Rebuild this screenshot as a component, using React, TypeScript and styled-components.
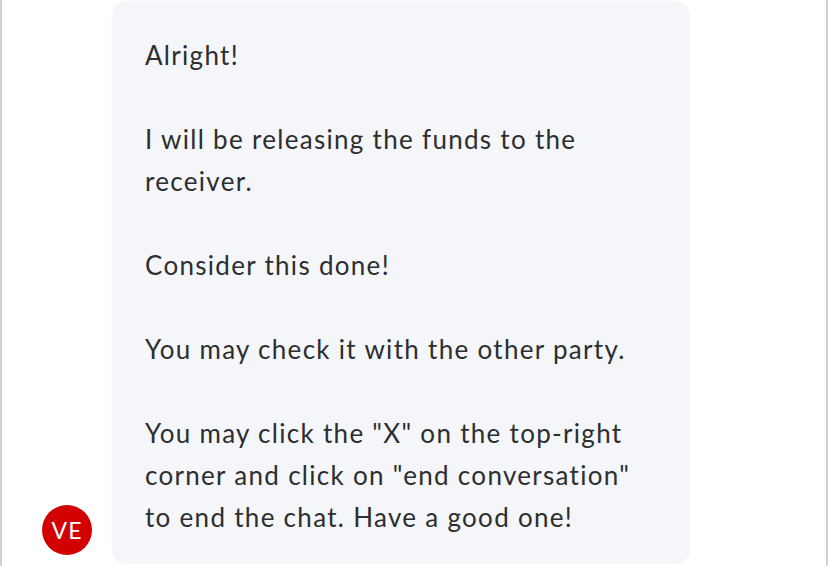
import React from "react";
import styled, { createGlobalStyle } from "styled-components";

const Global = createGlobalStyle`
  html, body { margin: 0; padding: 0; background: #fff; }
  body { font-family: Lato, "Open Sans", sans-serif; }
`;

const Frame = styled.div`
  box-sizing: border-box;
  width: 828px;
  height: 566px;
  border-left: 2px solid #cfd1d3;
  border-right: 2px solid #cfd1d3;
  overflow: hidden;
  display: flex;
  align-items: flex-start;
  padding: 1px 0 0 40px;
`;

const Row = styled.div`
  display: flex;
  align-items: flex-end;
  gap: 20px;
`;

const Avatar = styled.div`
  width: 50px;
  height: 50px;
  border-radius: 50%;
  background: #d20000;
  color: #fff;
  display: flex;
  align-items: center;
  justify-content: center;
  font-family: Lato, sans-serif;
  font-size: 23px;
  letter-spacing: 1px;
  margin-bottom: 9px;
  flex-shrink: 0;
`;

const Bubble = styled.div`
  box-sizing: border-box;
  width: 578px;
  background: #f5f6fa;
  border-radius: 16px;
  box-shadow: 0 0 2px rgba(0, 0, 0, 0.06);
  padding: 33px 20px 26px 33px;
  color: #2c2e2f;
  font-family: Lato, sans-serif;
  font-size: 26px;
  letter-spacing: 1.3px;
  line-height: 42px;
`;

const Para = styled.p`
  margin: 0 0 42px 0;
  &:last-child { margin-bottom: 0; }
`;

const Line = styled.span`
  display: block;
  white-space: nowrap;
`;

const paragraphs: string[][] = [
  ["Alright!"],
  ["I will be releasing the funds to the", "receiver."],
  ["Consider this done!"],
  ["You may check it with the other party."],
  [
    'You may click the "X" on the top-right',
    'corner and click on "end conversation"',
    "to end the chat. Have a good one!",
  ],
];

export default function App() {
  return (
    <>
      <Global />
      <Frame>
        <Row>
          <Avatar>VE</Avatar>
          <Bubble>
            {paragraphs.map((p, i) => (
              <Para key={i}>
                {p.map((l, j) => (
                  <Line key={j}>{l}</Line>
                ))}
              </Para>
            ))}
          </Bubble>
        </Row>
      </Frame>
    </>
  );
}
